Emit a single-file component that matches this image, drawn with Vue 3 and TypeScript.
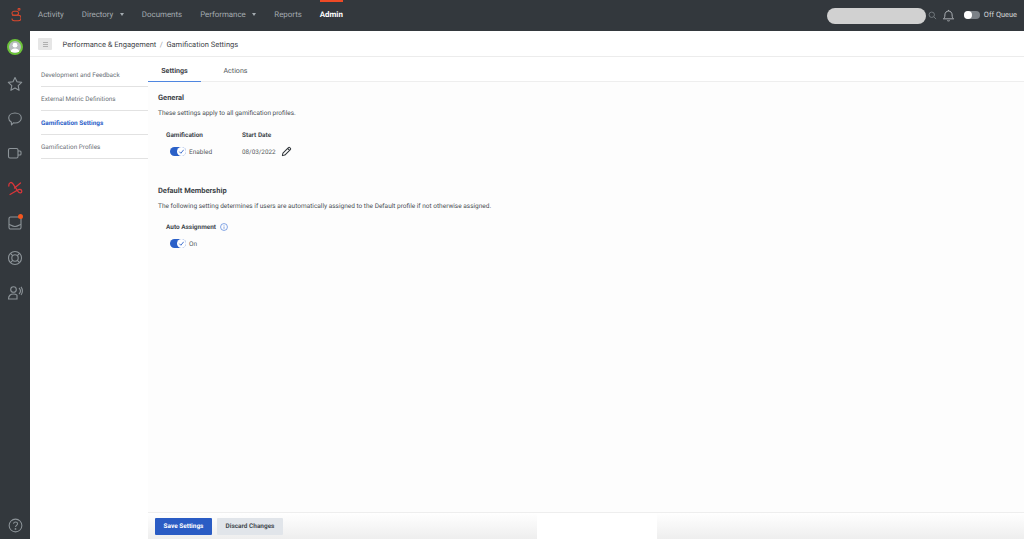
<script setup lang="ts">
const navItems = [
  { label: 'Activity', caret: false },
  { label: 'Directory', caret: true },
  { label: 'Documents', caret: false },
  { label: 'Performance', caret: true },
  { label: 'Reports', caret: false },
]
const sideLinks = [
  { label: 'Development and Feedback', active: false },
  { label: 'External Metric Definitions', active: false },
  { label: 'Gamification Settings', active: true },
  { label: 'Gamification Profiles', active: false },
]
</script>

<template>
  <div class="app">
    <header class="topbar">
      <svg class="logo" viewBox="0 0 10 15" width="10" height="15" fill="none" stroke="#d8482e" stroke-width="1.050">
        <circle cx="8" cy="1.300" r="1" />
        <rect x="1" y="3.200" width="6.500" height="4" rx="2" />
        <path d="M1 7.200h6.300a2.700 2.700 0 0 1 0 5.600H3.200A2.200 2.200 0 0 1 1 10.600" />
      </svg>
      <nav class="mainnav">
        <span v-for="item in navItems" :key="item.label" class="navitem">
          {{ item.label }}<i v-if="item.caret" class="caret"></i>
        </span>
        <span class="navitem admin">Admin</span>
      </nav>
      <div class="topright">
        <div class="search"></div>
        <svg class="searchicon" viewBox="0 0 12 12" width="9" height="9" fill="none" stroke="#7d8489" stroke-width="1.100">
          <circle cx="5" cy="5" r="3.600" /><path d="M7.800 7.800l3 3" />
        </svg>
        <svg class="bell" viewBox="0 0 14 14" width="13" height="13" fill="none" stroke="#b4b9bd" stroke-width="1">
          <path d="M1.500 10.600c1.300-1 1.600-2 1.600-4.200C3.100 3.900 4.800 2.200 7 2.200s3.900 1.700 3.900 4.200c0 2.200.3 3.200 1.600 4.200z" />
          <path d="M5.600 12.400c.7.600 2.100.6 2.800 0M7 1v1.200" />
        </svg>
        <span class="queue-toggle"><i></i></span>
        <span class="queue-label">Off Queue</span>
      </div>
    </header>

    <div class="body">
      <aside class="rail">
        <div class="avatar">
          <svg viewBox="0 0 12 12" width="12" height="12" fill="#fff">
            <circle cx="6" cy="4.200" r="2.400" /><path d="M1.500 11.500c.3-3 2-4 4.500-4s4.200 1 4.500 4z" />
          </svg>
        </div>
        <svg class="ico" viewBox="0 0 16 16" fill="none" stroke="#8d9499" stroke-width="1.100">
          <path d="M8 1.500l2 4.300 4.700.6-3.500 3.200.9 4.700L8 12l-4.100 2.300.9-4.700-3.500-3.200 4.700-.6z" stroke-linejoin="round" />
        </svg>
        <svg class="ico" viewBox="0 0 16 16" fill="none" stroke="#8d9499" stroke-width="1.100">
          <path d="M8 2c3.600 0 6.300 2.100 6.300 5s-2.700 5-6.300 5c-.6 0-1.100 0-1.600-.1L4.500 14l-.2-2.900C2.700 10.200 1.700 8.800 1.700 7 1.700 4.100 4.400 2 8 2z" stroke-linejoin="round" />
        </svg>
        <svg class="ico" viewBox="0 0 16 16" fill="none" stroke="#8d9499" stroke-width="1.100">
          <rect x="1.500" y="3.500" width="9.500" height="9.500" rx="1.500" />
          <path d="M11 6h2a1 1 0 0 1 1 1v2a1 1 0 0 1-1 1h-2" />
        </svg>
        <svg class="ico" viewBox="0 0 16 16" fill="none" stroke="#d9363a" stroke-width="1.300" stroke-linecap="round">
          <path d="M1.800 6C1.500 2.500 4.300 1.500 6 3.800L11 11.500C12.300 13.500 14.800 13.200 14.800 11.200C14.800 9.200 12.200 9 10.300 10.300L3 14.500" />
          <path d="M13.500 3L7.500 8" />
        </svg>
        <div class="inbox">
          <svg class="ico" viewBox="0 0 16 16" fill="none" stroke="#8d9499" stroke-width="1.100">
            <path d="M2 3.500A1.500 1.500 0 0 1 3.500 2h9A1.500 1.500 0 0 1 14 3.500v9a1.500 1.500 0 0 1-1.500 1.500h-9A1.500 1.500 0 0 1 2 12.500z" />
            <path d="M2 9.500c2 0 2.500 2 6 2s4-2 6-2" />
          </svg>
          <i class="dot"></i>
        </div>
        <svg class="ico" viewBox="0 0 16 16" fill="none" stroke="#8d9499" stroke-width="1.100">
          <circle cx="8" cy="8" r="6.500" /><circle cx="8" cy="8" r="3.200" />
          <path d="M3.400 3.400l2.300 2.300M12.600 3.400l-2.300 2.300M3.400 12.600l2.300-2.300M12.600 12.600l-2.300-2.300" />
        </svg>
        <svg class="ico" viewBox="0 0 16 16" fill="none" stroke="#8d9499" stroke-width="1.100">
          <circle cx="6.500" cy="4.500" r="2.800" />
          <path d="M1.500 14c0-3.300 2-5 5-5 1.500 0 2.600.4 3.500 1.200V14zM12 3c1 1 1.500 2 1.500 3s-.5 2-1.500 3M14 1.800c1 1.300 1.400 2.800 1.400 4.200S15 8.800 14 10" />
        </svg>
        <svg class="help" viewBox="0 0 16 16" fill="none" stroke="#8d9499" stroke-width="1.100">
          <circle cx="8" cy="8" r="6.800" />
          <path d="M5.900 6.200c.1-1.300 1-2 2.200-2s2.100.8 2.100 1.900c0 1.700-2.200 1.700-2.200 3.500" />
          <circle cx="8" cy="11.600" r=".4" />
        </svg>
      </aside>

      <div class="content">
        <div class="crumbs">
          <span class="menu-btn"><i></i></span>
          <span class="crumb">Performance &amp; Engagement</span>
          <span class="sep">/</span>
          <span class="crumb">Gamification Settings</span>
        </div>
        <div class="columns">
          <nav class="sidenav">
            <a v-for="link in sideLinks" :key="link.label" class="sidelink" :class="{ active: link.active }">{{ link.label }}</a>
          </nav>
          <main class="panel">
            <div class="tabs">
              <span class="tab active">Settings</span>
              <span class="tab">Actions</span>
            </div>
            <div class="scroll">
              <section class="general">
                <h2>General</h2>
                <p>These settings apply to all gamification profiles.</p>
                <div class="fields">
                  <div class="field gam">
                    <h3>Gamification</h3>
                    <div class="toggle-row">
                      <span class="toggle"><svg viewBox="0 0 8 8" width="7" height="7" fill="none" stroke="#2a60c8" stroke-width="1"><path d="M1.500 4.200l1.800 1.800 3.200-4" /></svg></span>
                      <span class="val">Enabled</span>
                    </div>
                  </div>
                  <div class="field">
                    <h3>Start Date</h3>
                    <div class="date-row">
                      <span class="val">08/03/2022</span>
                      <svg viewBox="0 0 12 12" width="11" height="11" fill="none" stroke="#2e3338" stroke-width="1.100">
                        <path d="M1.500 10.500l.6-2.700 6-6a1 1 0 0 1 1.500 0l.6.600a1 1 0 0 1 0 1.500l-6 6zM7.200 2.700l2.100 2.100" stroke-linejoin="round" />
                      </svg>
                    </div>
                  </div>
                </div>
              </section>
              <section class="membership">
                <h2>Default Membership</h2>
                <p>The following setting determines if users are automatically assigned to the Default profile if not otherwise assigned.</p>
                <div class="auto">
                  <h3>Auto Assignment
                    <svg viewBox="0 0 10 10" width="8" height="8" fill="none" stroke="#3f73d6" stroke-width=".8"><circle cx="5" cy="5" r="4.300" /><path d="M5 4.300v3M5 2.500v.8" /></svg>
                  </h3>
                  <div class="toggle-row">
                    <span class="toggle"><svg viewBox="0 0 8 8" width="7" height="7" fill="none" stroke="#2a60c8" stroke-width="1"><path d="M1.500 4.200l1.800 1.800 3.200-4" /></svg></span>
                    <span class="val">On</span>
                  </div>
                </div>
              </section>
            </div>
            <footer class="footer">
              <button class="btn primary">Save Settings</button>
              <button class="btn secondary">Discard Changes</button>
              <span class="patch"></span>
            </footer>
          </main>
        </div>
      </div>
    </div>
  </div>
</template>

<style>
html, body { margin: 0; background: #fff; }
</style>

<style scoped>
.app {
  width: 1024px;
  height: 539px;
  display: flex;
  flex-direction: column;
  overflow: hidden;
  font-family: Roboto, "Liberation Sans", sans-serif;
  color: #444a50;
  text-rendering: geometricPrecision;
}
.topbar {
  height: 31px;
  flex: none;
  background: #33383d;
  display: flex;
  align-items: center;
  position: relative;
}
.logo { margin-left: 11px; flex: none; }
.mainnav { display: flex; align-items: center; margin-left: 17px; gap: 18px; font-size: 7.900px; }
.navitem { color: #a4abb0; white-space: nowrap; display: inline-flex; align-items: center; position: relative; height: 31px; box-sizing: border-box; padding-bottom: 2px; }
.caret { margin-left: 6.500px; width: 0; height: 0; border: 2.500px solid transparent; border-top: 3px solid #a4abb0; border-bottom: 0; }
.admin { color: #fff; font-weight: 700; }
.admin::before { content: ""; position: absolute; left: 0; right: 0; top: 0; height: 1.500px; background: #ee4a26; }
.topright { margin-left: auto; display: flex; align-items: center; padding-right: 7px; }
.search { width: 99px; height: 16px; border-radius: 8px; background: #d1d1d1; }
.searchicon { margin-left: 2px; }
.bell { margin-left: 5px; }
.queue-toggle { margin: 0 0 2px 9px; width: 16px; height: 8px; border-radius: 4px; background: #7b8187; position: relative; }
.queue-toggle i { position: absolute; left: 0; top: 0; width: 8px; height: 8px; border-radius: 50%; background: #fff; }
.queue-label { margin-left: 4px; margin-bottom: 2px; font-size: 7.400px; color: #d3d6d8; }
.body { flex: 1; display: flex; min-height: 0; }
.rail {
  width: 30px;
  flex: none;
  background: #33383d;
  display: flex;
  flex-direction: column;
  align-items: center;
  padding-top: 8px;
  box-sizing: border-box;
  gap: 18.800px;
}
.avatar {
  width: 16px; height: 16px; border-radius: 50%;
  box-sizing: border-box;
  background: #b9bdbf; border: 2px solid #6cc23a;
  display: flex; align-items: flex-end; justify-content: center; overflow: hidden;
  margin-bottom: 2px;
}
.ico { width: 16px; height: 16px; display: block; }
.inbox { position: relative; width: 16px; height: 16px; }
.dot { position: absolute; right: 0; top: -1px; width: 5px; height: 5px; border-radius: 50%; background: #f4561f; }
.help { width: 15px; height: 15px; margin-top: auto; margin-bottom: 6px; }
.content { flex: 1; display: flex; flex-direction: column; min-width: 0; background: #fff; }
.crumbs {
  height: 26px; flex: none; box-sizing: border-box;
  display: flex; align-items: center; padding: 1px 0 0 8px;
  border-bottom: 1px solid #ececec;
  font-size: 7.500px; color: #3f454a;
}
.menu-btn { width: 14px; height: 12px; background: #e6e6e6; border-radius: 1px; margin-right: 10.500px; display: flex; align-items: center; justify-content: center; }
.menu-btn i { width: 5px; height: 1px; box-shadow: 0 -2px 0 #b0b0b0, 0 2px 0 #b0b0b0; background: #b0b0b0; }
.sep { margin: 0 3.500px; color: #9aa0a5; }
.columns { flex: 1; display: flex; min-height: 0; }
.sidenav { width: 118px; flex: none; padding-top: 5.500px; box-sizing: border-box; }
.sidelink {
  display: block; margin-left: 11px; height: 24px; line-height: 24px; box-sizing: border-box;
  border-bottom: 1px solid #e2e2e2; font-size: 6.400px; color: #6b7177; white-space: nowrap;
}
.sidelink.active { color: #2a60c8; font-weight: 700; }
.panel { flex: 1; display: flex; flex-direction: column; min-width: 0; position: relative; }
.tabs { height: 25px; flex: none; box-sizing: border-box; display: flex; border-bottom: 1px solid #eeeeee; }
.tab { width: 53px; text-align: center; font-size: 7.100px; line-height: 27px; height: 25px; box-sizing: border-box; color: #555b60; }
.tab.active { color: #3f454a; font-weight: 700; border-bottom: 1px solid #4f86e0; }
.tab + .tab { margin-left: 8px; }
.scroll { flex: 1; padding: 10px 0 0 10px; background: #fdfdfd; min-height: 0; }
h2 { margin: 0; font-size: 7.500px; font-weight: 700; color: #3f454a; line-height: 11px; }
p { margin: 5px 0 0; font-size: 6.500px; color: #4a5055; line-height: 10px; }
h3 { margin: 0; font-size: 6.450px; font-weight: 700; color: #444a50; line-height: 10px; display: flex; align-items: center; gap: 4px; }
.fields { display: flex; margin-top: 12px; margin-left: 8px; }
.field.gam { width: 76px; }
.toggle-row { display: flex; align-items: center; margin: 7px 0 0 4px; }
.toggle { width: 16px; height: 9px; border-radius: 5px; background: #2a60c8; position: relative; display: block; }
.toggle svg { position: absolute; right: 0; top: 0; width: 9px; height: 9px; border-radius: 50%; background: #fff; box-sizing: border-box; padding: 1px; }
.val { font-size: 6.500px; color: #555b60; margin-left: 3px; }
.date-row { display: flex; align-items: center; margin-top: 6px; }
.date-row .val { margin-left: 0; margin-right: 5px; font-size: 6.300px; }
.membership { margin-top: 28px; }
.auto { margin: 11px 0 0 8px; }
.footer {
  height: 27px; flex: none; box-sizing: border-box;
  border-top: 1px solid #eeeeee;
  background: linear-gradient(#ffffff, #eeeeee);
  display: flex; align-items: center; padding-left: 7px; gap: 5px; position: relative;
}
.patch { position: absolute; left: 389px; top: 0; width: 120px; height: 27px; background: #fff; }
.btn { height: 17px; border: 0; border-radius: 1px; font-family: inherit; font-size: 6.450px; font-weight: 700; padding: 0; text-rendering: geometricPrecision; }
.primary { width: 57px; background: #2a5cc4; color: #fff; }
.secondary { width: 66px; background: #e1e5ea; color: #444a50; }
</style>
